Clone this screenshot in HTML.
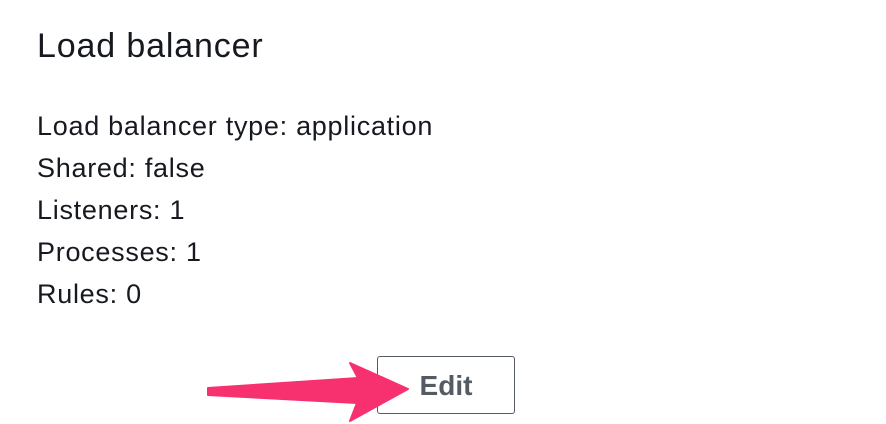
<!DOCTYPE html>
<html><head><style>
body{margin:0;width:886px;height:424px;background:#fff;position:relative;overflow:hidden;font-family:"Liberation Sans",sans-serif;color:#16191f}
.h{position:absolute;left:37px;top:26px;font-size:34px;line-height:40px;letter-spacing:0.85px}
.l{position:absolute;left:37px;font-size:27px;line-height:32px;letter-spacing:0.72px}
.btn{position:absolute;left:377px;top:356px;width:136px;height:56px;border:1.5px solid #545b64;border-radius:3px;box-sizing:content-box;text-align:center;line-height:58px;font-weight:bold;font-size:28px;color:#545b64}
</style></head><body>
<div class="h">Load balancer</div>
<div class="l" style="top:110px">Load balancer type: application</div>
<div class="l" style="top:152px">Shared: false</div>
<div class="l" style="top:194px">Listeners: 1</div>
<div class="l" style="top:236px">Processes: 1</div>
<div class="l" style="top:278px">Rules: 0</div>
<div class="btn">Edit</div>
<svg style="position:absolute;left:0;top:0" width="886" height="424">
<path d="M208 388 L358 378 L350 363 L408 389 L350 421 L357 403 L208 395 Z" fill="#f7316f" stroke="#f7316f" stroke-width="2" stroke-linejoin="round"/>
</svg>
</body></html>
